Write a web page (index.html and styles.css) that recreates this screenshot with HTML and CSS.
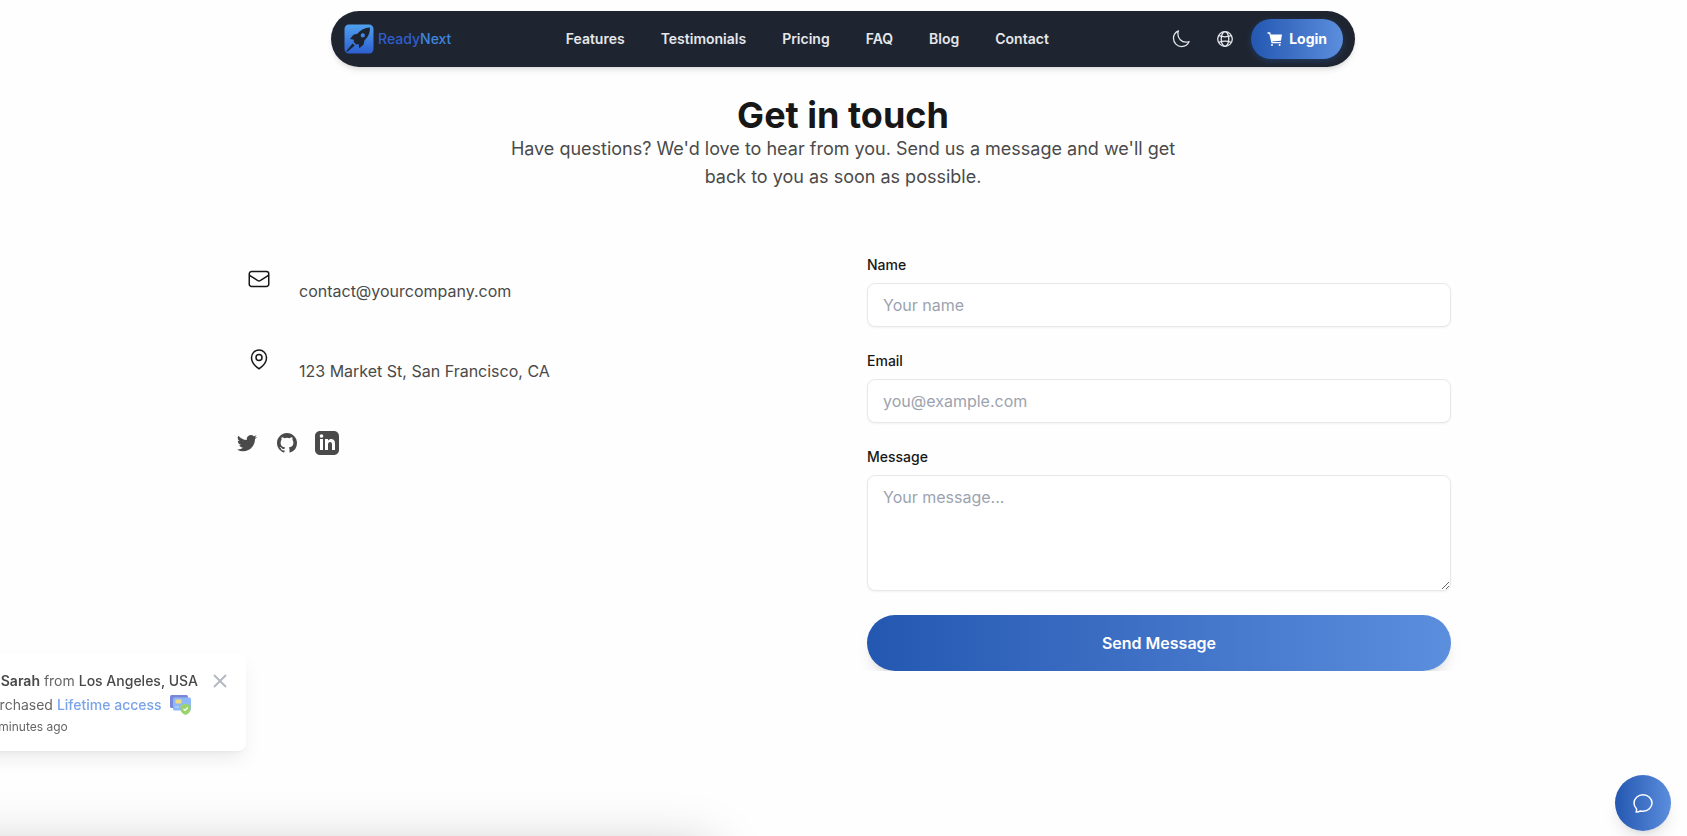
FILE: index.html
```html
<!DOCTYPE html>
<html lang="en">
<head>
<meta charset="utf-8">
<meta name="viewport" content="width=device-width, initial-scale=1">
<title>ReadyNext – Contact</title>
<link rel="stylesheet" href="styles.css">
</head>
<body>
<header class="navbar">
  <a class="brand" href="#">
    <svg class="brand-mark" viewBox="0 0 30 30" aria-hidden="true">
      <defs><linearGradient id="mark" x1="0" y1="0" x2="0" y2="1"><stop offset="0" stop-color="#4fa0ee"/><stop offset="1" stop-color="#2d5fd0"/></linearGradient></defs>
      <rect x="0.500" y="0.500" width="29" height="29" rx="4.500" fill="url(#mark)"/>
      <path fill="#1d2430" fill-rule="evenodd" d="M26 3.500c-5 .3-9.600 2.500-12.600 6.300L9.500 10.800 6 15l4 .8c-.2.800-.3 1.500-.3 2.200l2.500 2.500c.8 0 1.500-.1 2.300-.4l.8 4.200 4.300-3.700.8-4C24.200 13.200 26.200 8.700 26 3.500zM18.800 9.300a2.100 2.100 0 1 1 0 4.200 2.100 2.100 0 0 1 0-4.200z"/>
      <path fill="#1d2430" d="M8.600 19.400l2.200 2.200L3 28l-.8-.8z"/>
    </svg>
    <span class="brand-name"><span class="brand-first">Ready</span><span class="brand-second">Next</span></span>
  </a>
  <nav class="links" aria-label="Main">
    <a href="#">Features</a>
    <a href="#">Testimonials</a>
    <a href="#">Pricing</a>
    <a href="#">FAQ</a>
    <a href="#">Blog</a>
    <a href="#">Contact</a>
  </nav>
  <div class="actions">
    <button class="icon-button" type="button" aria-label="Toggle theme">
      <svg viewBox="0 0 24 24" width="20" height="20" fill="none" stroke="currentColor" stroke-width="1.500" stroke-linecap="round" stroke-linejoin="round"><path d="M21.752 15.002A9.720 9.720 0 0 1 18 15.750c-5.385 0-9.750-4.365-9.750-9.750 0-1.330.266-2.597.748-3.752A9.753 9.753 0 0 0 3 11.250C3 16.635 7.365 21 12.750 21a9.753 9.753 0 0 0 9.002-5.998Z"/></svg>
    </button>
    <button class="icon-button" type="button" aria-label="Language">
      <svg viewBox="0 0 16 16" width="16" height="16" fill="none" stroke="currentColor" stroke-width="1.300"><circle cx="8" cy="8" r="7.300"/><ellipse cx="8" cy="8" rx="3.800" ry="7.300"/><path d="M1.700 4.700c3.800 1.300 8.800 1.300 12.600 0M1.700 11.300c3.800-1.300 8.800-1.300 12.600 0"/></svg>
    </button>
    <button class="login" type="button">
      <svg viewBox="0 0 16 16" width="16" height="16" aria-hidden="true"><path fill="none" stroke="#fff" stroke-width="1.300" stroke-linecap="round" stroke-linejoin="round" d="M1 2h1.800l2.200 9.600h8.500"/><path fill="#fff" d="M3.300 3.600h11.700l-1 6.200-9.200.8z"/><circle cx="5" cy="14" r="1" fill="#fff"/><circle cx="12.600" cy="14" r="1" fill="#fff"/></svg>
      Login
    </button>
  </div>
</header>

<main class="page">
  <section class="intro">
    <h1>Get in touch</h1>
    <p>Have questions? We'd love to hear from you. Send us a message and we'll get back to you as soon as possible.</p>
  </section>

  <div class="columns">
    <section class="details" aria-label="Contact details">
      <div class="detail">
        <span class="detail-icon"><svg viewBox="0 0 24 24" width="24" height="24" fill="none" stroke="currentColor" stroke-width="1.500" stroke-linecap="round" stroke-linejoin="round" aria-hidden="true"><path d="M21.750 6.750v10.500a2.250 2.250 0 0 1-2.250 2.250h-15a2.250 2.250 0 0 1-2.250-2.250V6.750m19.500 0A2.250 2.250 0 0 0 19.500 4.500h-15a2.250 2.250 0 0 0-2.250 2.250m19.500 0v.243a2.250 2.250 0 0 1-1.070 1.916l-7.500 4.615a2.250 2.250 0 0 1-2.360 0L3.320 8.910a2.250 2.250 0 0 1-1.070-1.916V6.750"/></svg></span>
        <p>contact@yourcompany.com</p>
      </div>
      <div class="detail">
        <span class="detail-icon"><svg viewBox="0 0 24 24" width="24" height="24" fill="none" stroke="currentColor" stroke-width="1.500" stroke-linecap="round" stroke-linejoin="round" aria-hidden="true"><path d="M15 10.500a3 3 0 1 1-6 0 3 3 0 0 1 6 0Z"/><path d="M19.500 10.500c0 7.142-7.500 11.250-7.500 11.250S4.500 17.642 4.500 10.500a7.500 7.500 0 1 1 15 0Z"/></svg></span>
        <p>123 Market St, San Francisco, CA</p>
      </div>
      <div class="social">
        <a href="#" aria-label="Twitter"><svg viewBox="0 0 24 24" width="24" height="24" fill="currentColor"><path d="M8.290 20.251c7.547 0 11.675-6.253 11.675-11.675 0-.178 0-.355-.012-.53A8.348 8.348 0 0 0 22 5.920a8.190 8.190 0 0 1-2.357.646 4.118 4.118 0 0 0 1.804-2.270 8.224 8.224 0 0 1-2.605.996 4.107 4.107 0 0 0-6.993 3.743 11.650 11.650 0 0 1-8.457-4.287 4.106 4.106 0 0 0 1.270 5.477A4.072 4.072 0 0 1 2.800 9.713v.052a4.105 4.105 0 0 0 3.292 4.022 4.095 4.095 0 0 1-1.853.070 4.108 4.108 0 0 0 3.834 2.850A8.233 8.233 0 0 1 2 18.407a11.616 11.616 0 0 0 6.290 1.840"/></svg></a>
        <a href="#" aria-label="GitHub"><svg viewBox="0 0 24 24" width="24" height="24" fill="currentColor"><path fill-rule="evenodd" d="M12 2C6.477 2 2 6.484 2 12.017c0 4.425 2.865 8.180 6.839 9.504.5.092.682-.217.682-.483 0-.237-.008-.868-.013-1.703-2.782.605-3.369-1.343-3.369-1.343-.454-1.158-1.110-1.466-1.110-1.466-.908-.620.069-.608.069-.608 1.003.070 1.531 1.032 1.531 1.032.892 1.530 2.341 1.088 2.910.832.092-.647.350-1.088.636-1.338-2.220-.253-4.555-1.113-4.555-4.951 0-1.093.390-1.988 1.029-2.688-.103-.253-.446-1.272.098-2.650 0 0 .840-.270 2.750 1.026A9.564 9.564 0 0 1 12 6.844a9.590 9.590 0 0 1 2.504.337c1.909-1.296 2.747-1.027 2.747-1.027.546 1.379.202 2.398.100 2.651.640.700 1.028 1.595 1.028 2.688 0 3.848-2.339 4.695-4.566 4.943.359.309.678.920.678 1.855 0 1.338-.012 2.419-.012 2.747 0 .268.180.580.688.482A10.020 10.020 0 0 0 22 12.017C22 6.484 17.522 2 12 2z"/></svg></a>
        <a href="#" aria-label="LinkedIn"><svg viewBox="0 0 24 24" width="24" height="24" fill="currentColor"><path d="M19 0h-14c-2.761 0-5 2.239-5 5v14c0 2.761 2.239 5 5 5h14c2.762 0 5-2.239 5-5v-14c0-2.761-2.238-5-5-5zm-11 19h-3v-11h3v11zm-1.500-12.268c-.966 0-1.750-.790-1.750-1.764s.784-1.764 1.750-1.764 1.750.790 1.750 1.764-.783 1.764-1.750 1.764zm13.500 12.268h-3v-5.604c0-3.368-4-3.113-4 0v5.604h-3v-11h3v1.765c1.396-2.586 7-2.777 7 2.476v6.759z"/></svg></a>
      </div>
    </section>

    <form class="form">
      <div class="field">
        <label for="name">Name</label>
        <input id="name" type="text" placeholder="Your name">
      </div>
      <div class="field">
        <label for="email">Email</label>
        <input id="email" type="email" placeholder="you@example.com">
      </div>
      <div class="field">
        <label for="message">Message</label>
        <textarea id="message" placeholder="Your message..."></textarea>
      </div>
      <button class="send" type="submit">Send Message</button>
    </form>
  </div>
</main>

<aside class="toast">
  <div class="toast-text">
    <p class="toast-who"><strong>Sarah</strong> from <b>Los Angeles, USA</b></p>
    <p class="toast-what">purchased <a href="#">Lifetime access</a>
      <svg viewBox="0 0 21 20" width="21" height="20" aria-hidden="true"><rect width="18" height="13" rx="1.500" fill="#7c86d8"/><rect x="3" y="2.500" width="18" height="13" rx="1.500" fill="#8fb8fa"/><rect x="5.500" y="4.500" width="6" height="4" rx="1" fill="#f0dc7c"/><path d="M5 12h4" stroke="#c9dcfc"/><path d="M15.500 8.500l5 2v3.500c0 3-2 5-5 6-3-1-5-3-5-6v-3.500z" fill="#9ad36c"/><path d="M13.500 14l1.500 1.500 2.800-3" fill="none" stroke="#fff" stroke-width="1.200"/></svg>
    </p>
    <p class="toast-when">12 minutes ago</p>
  </div>
  <button class="toast-close" type="button" aria-label="Close"><svg viewBox="0 0 20 20" width="20" height="20" fill="none" stroke="currentColor" stroke-width="1.900"><path d="M4 4l12 12M16 4L4 16"/></svg></button>
</aside>

<div class="drawer"></div>

<button class="chat" type="button" aria-label="Open chat"><svg viewBox="0 0 24 24" width="24" height="24" fill="none" stroke="currentColor" stroke-width="1.500" stroke-linecap="round" stroke-linejoin="round"><path d="M12 20.200c5 0 9-3.700 9-8.200s-4-8.200-9-8.200-9 3.700-9 8.200c0 2.200.9 4.100 2.300 5.500.5.700.4 2.200-.2 3.500 1.700.1 3-.2 4.400-1.100.8.200 1.700.3 2.500.3z"/></svg></button>
</body>
</html>
```

FILE: styles.css
```css
*, *::before, *::after { box-sizing: border-box; }
body {
  margin: 0;
  padding: 11px 1px 0 0;
  font-family: Inter, "Liberation Sans", sans-serif;
  font-size: 16px;
  line-height: 24px;
  color: #171717;
  background: #fefefe;
}
h1, p { margin: 0; }
a { color: inherit; text-decoration: none; }
button, input, textarea { font: inherit; }
button { border: 0; padding: 0; cursor: pointer; }
svg { display: block; flex: none; }

.navbar {
  display: flex;
  justify-content: space-between;
  align-items: center;
  max-width: 1024px;
  height: 56px;
  margin: 0 auto;
  padding: 0 12px;
  border-radius: 28px;
  background: #1f2530;
  box-shadow: 0 4px 6px -1px rgba(0, 0, 0, 0.1), 0 2px 4px -2px rgba(0, 0, 0, 0.1);
}
.brand { display: flex; align-items: center; gap: 4px; padding-left: 1px; }
.brand-mark { width: 30px; height: 30px; }
.brand-name { font-size: 14px; font-weight: 500; }
.brand-first { color: #2f5dcc; }
.brand-second { color: #3f86dd; }
.links {
  display: flex;
  gap: 36px;
  font-size: 14px;
  font-weight: 600;
  color: #e5e7eb;
}
.actions { display: flex; align-items: center; gap: 8px; color: #e5e7eb; }
.icon-button {
  display: grid;
  place-items: center;
  width: 36px;
  height: 36px;
  background: none;
  color: inherit;
}
.login {
  display: flex;
  align-items: center;
  gap: 6px;
  height: 40px;
  padding: 0 16px;
  border-radius: 20px;
  color: #fff;
  font-size: 14px;
  font-weight: 700;
  background: linear-gradient(to right, #2457b0, #5b8edd);
  box-shadow: 0 2px 6px rgba(36, 87, 176, 0.4);
}

.page { max-width: 1280px; margin: 0 auto; padding: 28px 32px 0; }
.intro { max-width: 672px; margin: 0 auto 64px; text-align: center; }
.intro h1 { font-size: 36px; line-height: 40px; font-weight: 700; }
.intro p { font-size: 18px; line-height: 28px; color: #4a4a4a; }

.columns { display: grid; grid-template-columns: 1fr 1fr; gap: 48px; }
.details { display: flex; flex-direction: column; gap: 32px; color: #4a4a4a; }
.detail { display: flex; align-items: flex-end; gap: 16px; }
.detail-icon { display: grid; place-items: center; width: 48px; height: 48px; color: #171717; }
.social { display: flex; gap: 16px; margin-top: 16px; }

.form { display: flex; flex-direction: column; gap: 24px; }
.field { display: flex; flex-direction: column; gap: 8px; }
.field label { font-size: 14px; line-height: 20px; font-weight: 500; }
.field input, .field textarea {
  width: 100%;
  height: 44px;
  padding: 9px 15px;
  border: 1px solid #e7e8ea;
  border-radius: 8px;
  background: #fff;
  color: #171717;
  box-shadow: 0 1px 2px rgba(0, 0, 0, 0.05);
}
.field textarea { height: 116px; resize: vertical; }
.field ::placeholder { color: #9ca3af; opacity: 1; }
.send {
  height: 56px;
  border-radius: 28px;
  color: #fff;
  font-weight: 600;
  background: linear-gradient(to right, #2457b0, #5b8edd);
  box-shadow: 0 10px 15px -3px rgba(0, 0, 0, 0.1), 0 4px 6px -4px rgba(0, 0, 0, 0.1);
}

.toast {
  position: fixed;
  right: calc(100% - 246px);
  bottom: 85px;
  display: flex;
  gap: 12px;
  align-items: flex-start;
  width: max-content;
  padding: 16px 16px 14px;
  border-radius: 8px;
  background: #fff;
  color: #666;
  font-size: 14px;
  white-space: nowrap;
  box-shadow: 0 10px 20px -3px rgba(0, 0, 0, 0.08), 0 4px 6px -4px rgba(0, 0, 0, 0.08);
}
.toast strong { font-weight: 600; color: #484848; }
.toast b { font-weight: 500; color: #484848; }
.toast-who { padding-left: 18px; }
.toast-what { display: flex; align-items: center; gap: 4px; }
.toast-what a { color: #78a3e8; font-weight: 500; margin-right: 4px; }
.toast-when { font-size: 12px; line-height: 20px; }
.toast-close { background: none; color: #b4b8c2; margin-top: 2px; }

.drawer {
  position: fixed;
  top: 100%;
  left: -60px;
  width: 770px;
  height: 200px;
  box-shadow: 0 14px 50px rgba(0, 0, 0, 0.25);
}

.chat {
  position: fixed;
  right: 16px;
  bottom: 5px;
  display: grid;
  place-items: center;
  width: 56px;
  height: 56px;
  border-radius: 50%;
  color: #fff;
  background: linear-gradient(to right, #2457b0, #5b8edd);
  box-shadow: 0 10px 15px -3px rgba(0, 0, 0, 0.1), 0 4px 6px -4px rgba(0, 0, 0, 0.1);
}
```
